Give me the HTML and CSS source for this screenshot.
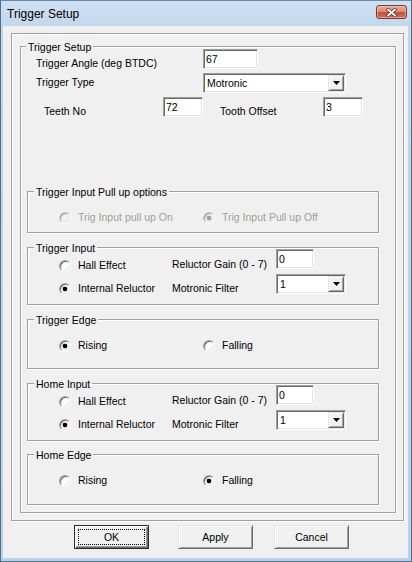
FILE: index.html
```html
<!DOCTYPE html>
<html>
<head>
<meta charset="utf-8">
<title>Trigger Setup</title>
<link rel="stylesheet" href="styles.css">
</head>
<body>
<div class="window">
  <div class="titlebar">
    <span class="title">Trigger Setup</span>
    <span class="close"><svg width="13" height="9" viewBox="0 0 13 9"><path d="M3 1.5 L10 7.5 M10 1.5 L3 7.5" stroke="#5a1e18" stroke-width="3.4" stroke-linecap="round"/><path d="M3 1.5 L10 7.5 M10 1.5 L3 7.5" stroke="#fff" stroke-width="2" stroke-linecap="round"/></svg></span>
  </div>
  <div class="client">
    <div class="panel">
      <div class="group main">
        <span class="legend">Trigger Setup</span>
        <div class="row r1">
          <span class="lbl pad-a">Trigger Angle (deg BTDC)</span>
          <input class="edit w55" value="67">
        </div>
        <div class="row r2">
          <span class="lbl pad-b">Trigger Type</span>
          <div class="combo w143"><span class="val">Motronic</span><span class="drop"><svg width="7" height="4" viewBox="0 0 7 4"><path d="M0 0 H7 L3.5 4 Z" fill="#000"/></svg></span></div>
        </div>
        <div class="row r3">
          <span class="lbl pad-c">Teeth No</span>
          <input class="edit w40" value="72">
          <span></span>
          <span class="lbl pad-d">Tooth Offset</span>
          <input class="edit w40" value="3">
        </div>

        <div class="group sub h42 first">
          <span class="legend">Trigger Input Pull up options</span>
          <div class="edge-row">
            <label class="opt disabled"><input type="radio" class="radio" name="pu" disabled>Trig Input pull up On</label>
            <label class="opt disabled"><input type="radio" class="radio" name="pu" disabled checked>Trig Input Pull up Off</label>
          </div>
        </div>

        <div class="group sub h58">
          <span class="legend">Trigger Input</span>
          <div class="io-row top">
            <label class="opt"><input type="radio" class="radio" name="ti">Hall Effect</label>
            <span class="lbl">Reluctor Gain (0 - 7)</span>
            <input class="edit w38" value="0">
          </div>
          <div class="io-row bottom">
            <label class="opt"><input type="radio" class="radio" name="ti" checked>Internal Reluctor</label>
            <span class="lbl">Motronic Filter</span>
            <div class="combo w70"><span class="val">1</span><span class="drop"><svg width="7" height="4" viewBox="0 0 7 4"><path d="M0 0 H7 L3.5 4 Z" fill="#000"/></svg></span></div>
          </div>
        </div>

        <div class="group sub h50">
          <span class="legend">Trigger Edge</span>
          <div class="edge-row">
            <label class="opt"><input type="radio" class="radio" name="te" checked>Rising</label>
            <label class="opt"><input type="radio" class="radio" name="te">Falling</label>
          </div>
        </div>

        <div class="group sub h58">
          <span class="legend">Home Input</span>
          <div class="io-row top">
            <label class="opt"><input type="radio" class="radio" name="hi">Hall Effect</label>
            <span class="lbl">Reluctor Gain (0 - 7)</span>
            <input class="edit w38" value="0">
          </div>
          <div class="io-row bottom">
            <label class="opt"><input type="radio" class="radio" name="hi" checked>Internal Reluctor</label>
            <span class="lbl">Motronic Filter</span>
            <div class="combo w70"><span class="val">1</span><span class="drop"><svg width="7" height="4" viewBox="0 0 7 4"><path d="M0 0 H7 L3.5 4 Z" fill="#000"/></svg></span></div>
          </div>
        </div>

        <div class="group sub h51 last">
          <span class="legend">Home Edge</span>
          <div class="edge-row">
            <label class="opt"><input type="radio" class="radio" name="he">Rising</label>
            <label class="opt"><input type="radio" class="radio" name="he" checked>Falling</label>
          </div>
        </div>
      </div>
    </div>
    <div class="buttons">
      <button class="btn default"><span class="focus">OK</span></button>
      <button class="btn">Apply</button>
      <button class="btn">Cancel</button>
    </div>
  </div>
</div>
</body>
</html>
```
FILE: styles.css
```css
html, body {
  margin: 0;
  padding: 0;
  background: #b9d1ea;
}

body {
  font-family: "Liberation Sans", Arial, sans-serif;
  font-size: 10.5px;
  line-height: 13px;
  color: #000;
}

.window {
  box-sizing: border-box;
  width: 412px;
  height: 562px;
  display: flex;
  flex-direction: column;
  padding: 0 3px 3px 2px;
  border: 1px solid #4f6f90;
  border-top-color: #6f8cab;
  background: linear-gradient(180deg, #cfe0f2 0px, #c2d7ed 26px, #b9d1ea 100%);
}

.titlebar {
  height: 25px;
  display: flex;
  justify-content: space-between;
  align-items: flex-start;
  padding: 0 1px 0 4px;
  flex: none;
}

.title {
  margin-top: 6px;
  font-size: 12px;
  line-height: 14px;
  color: #000;
}

.close {
  margin-top: 4px;
  box-sizing: border-box;
  width: 31px;
  height: 14px;
  border: 1px solid #7a3b33;
  border-radius: 3px;
  background: linear-gradient(180deg, #e9a99c 0%, #dc8b7a 45%, #c44f3c 55%, #d27360 100%);
  box-shadow: inset 0 0 0 1px rgba(255, 220, 210, 0.45);
  display: flex;
  align-items: center;
  justify-content: center;
}

.client {
  flex: 1;
  background: #f0f0f0;
  padding: 7px 0 0 8px;
}

.panel {
  box-sizing: border-box;
  width: 393px;
  height: 488px;
  border: 1px solid #a0a0a0;
  box-shadow: 1px 1px 0 #fff, inset 1px 1px 0 #fff;
  padding-top: 12px;
  padding-left: 8px;
}

.group {
  position: relative;
  box-sizing: border-box;
  border: 1px solid #a0a0a0;
  box-shadow: 1px 1px 0 #fff, inset 1px 1px 0 #fff;
}

.main {
  width: 376px;
  height: 467px;
}

.legend {
  position: absolute;
  top: -6px;
  left: 5px;
  padding: 0 2px;
  background: #f0f0f0;
  line-height: 13px;
  white-space: nowrap;
}

.sub .legend {
  left: 6px;
}

.row {
  display: grid;
  align-items: start;
  height: 20px;
}

.r1 {
  grid-template-columns: 182px 55px;
  margin-top: 2px;
}

.r2 {
  grid-template-columns: 182px 143px;
  margin-top: 4px;
}

.r3 {
  grid-template-columns: 142px 40px 17px 103px 40px;
  margin-top: 4px;
}

.pad-a {
  padding-left: 15px;
  padding-top: 8px;
}

.pad-b {
  padding-left: 15px;
  padding-top: 3px;
}

.pad-c {
  padding-left: 23px;
  padding-top: 8px;
}

.pad-d {
  padding-top: 8px;
}

.lbl {
  white-space: nowrap;
}

.edit {
  box-sizing: border-box;
  height: 20px;
  margin: 0;
  padding: 0 0 0 2px;
  font: inherit;
  line-height: 18px;
  color: #000;
  border: 1px solid;
  border-color: #a0a0a0 #fff #fff #a0a0a0;
  box-shadow: inset 1px 1px 0 #696969, inset -1px -1px 0 #e3e3e3;
  background: #fff;
  outline: none;
  border-radius: 0;
}

.w55 { width: 55px; }
.w40 { width: 40px; }
.w38 { width: 38px; }
.w143 { width: 143px; }
.w70 { width: 70px; }

.combo {
  box-sizing: border-box;
  height: 20px;
  display: flex;
  align-items: stretch;
  border: 1px solid;
  border-color: #a0a0a0 #fff #fff #a0a0a0;
  box-shadow: inset 1px 1px 0 #696969, inset -1px -1px 0 #e3e3e3;
  background: #fff;
  padding: 1px;
}

.combo .val {
  flex: 1;
  padding-left: 2px;
  line-height: 16px;
}

.combo .drop {
  box-sizing: border-box;
  width: 16px;
  background: #f0f0f0;
  border: 1px solid;
  border-color: #e3e3e3 #696969 #696969 #e3e3e3;
  box-shadow: inset 1px 1px 0 #fff, inset -1px -1px 0 #a0a0a0;
  display: flex;
  align-items: center;
  justify-content: center;
}

.sub {
  width: 352px;
  margin-left: 6px;
  margin-top: 14px;
}

.sub.first {
  margin-top: 74px;
}

.sub.last {
  margin-top: 13px;
}

.h42 { height: 42px; }
.h58 { height: 58px; }
.h50 { height: 50px; }
.h51 { height: 51px; }

.opt {
  display: flex;
  align-items: center;
  gap: 7px;
  height: 13px;
  white-space: nowrap;
}

.opt.disabled {
  color: #a0a0a0;
}

.radio {
  -webkit-appearance: none;
  appearance: none;
  box-sizing: border-box;
  margin: 0;
  width: 12px;
  height: 12px;
  flex: none;
  border-radius: 50%;
  border: 1px solid;
  border-color: #a0a0a0 #fff #fff #a0a0a0;
  box-shadow: inset 1px 1px 0 #696969, inset -1px -1px 0 #e3e3e3;
  background: #fff;
}

.radio:checked {
  background: radial-gradient(circle at 50% 50%, #000 0, #000 2px, #fff 2.7px);
}

.radio:disabled {
  background: #f0f0f0;
  border-color: #c8c8c8 #fff #fff #c8c8c8;
  box-shadow: inset 1px 1px 0 #a0a0a0, inset -1px -1px 0 #e3e3e3;
}

.radio:disabled:checked {
  background: radial-gradient(circle at 50% 50%, #a0a0a0 0, #a0a0a0 2px, #f0f0f0 2.7px);
}

.edge-row {
  display: grid;
  grid-template-columns: 144px auto;
  margin-left: 31px;
  margin-top: 19px;
}

.io-row {
  display: grid;
  grid-template-columns: 113px 104px auto;
  align-items: start;
  height: 20px;
  margin-left: 31px;
}

.io-row.top {
  margin-top: 1px;
}

.io-row.top .opt {
  margin-top: 10px;
}

.io-row.top .lbl {
  padding-top: 9px;
}

.io-row.bottom {
  margin-top: 5px;
}

.io-row.bottom .opt {
  margin-top: 8px;
}

.io-row.bottom .lbl {
  padding-top: 8px;
}

.buttons {
  display: grid;
  grid-template-columns: 104px 96px 75px;
  margin: 4px 0 0 63px;
}

.btn {
  box-sizing: border-box;
  width: 75px;
  height: 24px;
  margin: 0;
  padding: 0;
  font: inherit;
  color: #000;
  background: #f0f0f0;
  border: 1px solid;
  border-color: #e3e3e3 #696969 #696969 #e3e3e3;
  box-shadow: inset 1px 1px 0 #fff, inset -1px -1px 0 #a0a0a0;
  border-radius: 0;
}

.btn.default {
  border-color: #2b2b2b;
  box-shadow: inset 1px 1px 0 #fff, inset -1px -1px 0 #696969, inset -2px -2px 0 #a0a0a0;
  padding: 3px;
}

.btn .focus {
  display: flex;
  align-items: center;
  justify-content: center;
  height: 100%;
  box-sizing: border-box;
  border: 1px dotted #000;
}
```
